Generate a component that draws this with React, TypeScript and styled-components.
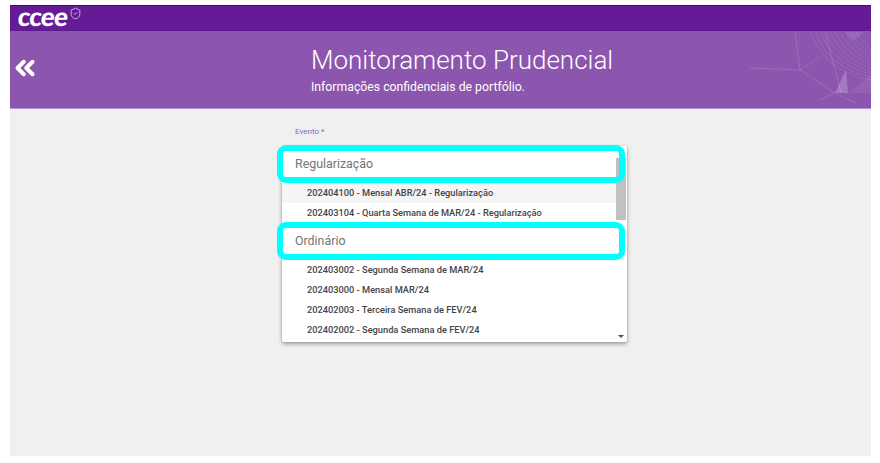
import React from "react";
import styled, { createGlobalStyle } from "styled-components";
import { ChevronsLeft, ShieldCheck } from "lucide-react";

const GlobalStyle = createGlobalStyle`
  html, body {
    margin: 0;
    padding: 0;
    background: #fff;
    font-family: Roboto, "Liberation Sans", sans-serif;
  }
`;

const Page = styled.div`
  width: 880px;
  height: 463px;
  padding: 5px 9px 7px 10px;
  box-sizing: border-box;
  overflow: hidden;
`;

const Screen = styled.div`
  height: 100%;
  display: flex;
  flex-direction: column;
  background: #f0f0f0;
`;

const TopBar = styled.header`
  flex: none;
  height: 26px;
  box-sizing: border-box;
  display: flex;
  align-items: flex-start;
  padding-left: 8px;
  background: #651b96;
  border-top: 1px solid #3b1259;
  border-bottom: 1px solid #5c1a88;
`;

const Logo = styled.div`
  display: flex;
  align-items: flex-start;
  color: #fff;
`;

const LogoName = styled.span`
  font-family: Lato, sans-serif;
  font-weight: 900;
  font-size: 26px;
  line-height: 20px;
  letter-spacing: -0.8px;
  transform: skewX(-6deg);
`;

const LogoShield = styled(ShieldCheck)`
  margin: 1px 0 0 2px;
  color: #e4d6ee;
`;

const Banner = styled.section`
  flex: none;
  position: relative;
  height: 78px;
  box-sizing: border-box;
  display: flex;
  align-items: flex-start;
  background: #8c55ae;
  border-bottom: 1px solid #b893cf;
  overflow: hidden;
`;

const BackButton = styled.button`
  flex: none;
  width: 30px;
  height: 32px;
  margin: 21px 0 0 0;
  padding: 0;
  border: 0;
  background: none;
  color: #fff;
  display: flex;
  align-items: center;
  justify-content: center;
`;

const Heading = styled.div`
  margin-left: 271px;
  padding-top: 13px;
  color: #fff;
`;

const Title = styled.h1`
  margin: 0;
  font-weight: 300;
  font-size: 26px;
  line-height: 33px;
`;

const Subtitle = styled.p`
  margin: 3px 0 0;
  font-size: 12.25px;
  line-height: 15px;
`;

const BannerArt = styled.svg`
  position: absolute;
  right: 0;
  top: 0;
`;

const Content = styled.main`
  flex: 1;
  padding: 18px 0 0 272px;
`;

const FieldLabel = styled.label`
  display: block;
  padding-left: 13px;
  font-size: 8px;
  line-height: 10px;
  color: #6c70bd;
`;

const Dropdown = styled.div`
  position: relative;
  width: 345px;
  height: 196px;
  margin-top: 9px;
  padding-right: 11px;
  box-sizing: border-box;
  background: #fff;
  border-radius: 2px;
  box-shadow: 0 2px 4px rgba(0, 0, 0, 0.35), 0 0 2px rgba(0, 0, 0, 0.15);
`;

const GroupHeader = styled.div`
  position: relative;
  z-index: 1;
  height: 37px;
  padding-left: 13px;
  font-size: 12.4px;
  line-height: 36px;
  color: #757575;

  &::after {
    content: "";
    position: absolute;
    left: -5px;
    right: -9px;
    top: -1px;
    bottom: 0;
    box-sizing: border-box;
    border: 6px solid #00ffff;
    border-radius: 9px;
  }
`;

const Option = styled.div<{ $active?: boolean }>`
  height: 20px;
  padding-left: 25px;
  font-size: 9.25px;
  font-weight: 500;
  line-height: 19px;
  color: #444;
  background: ${(p) => (p.$active ? "#f5f5f5" : "#fff")};
`;

const Scrollbar = styled.div`
  position: absolute;
  top: 0;
  right: 1px;
  bottom: 0;
  width: 10px;
  padding-top: 12px;
  box-sizing: border-box;
  background: #fff;
`;

const ScrollThumb = styled.div`
  height: 62px;
  background: #c1c1c1;
`;

const ScrollArrow = styled.div`
  position: absolute;
  left: 2px;
  bottom: 4px;
  border-left: 3px solid transparent;
  border-right: 3px solid transparent;
  border-top: 3px solid #505050;
`;

const regularizacao = [
  "202404100 - Mensal ABR/24 - Regularização",
  "202403104 - Quarta Semana de MAR/24 - Regularização",
];

const ordinario = [
  "202403002 - Segunda Semana de MAR/24",
  "202403000 - Mensal MAR/24",
  "202402003 - Terceira Semana de FEV/24",
  "202402002 - Segunda Semana de FEV/24",
];

const arcSteps = [0, 1, 2, 3, 4, 5, 6, 7, 8, 9];

const App = () => {
  return (
    <Page>
      <GlobalStyle />
      <Screen>
        <TopBar>
          <Logo>
            <LogoName>ccee</LogoName>
            <LogoShield size={13} strokeWidth={1.4} />
          </Logo>
        </TopBar>
        <Banner>
          <BackButton aria-label="Voltar">
            <ChevronsLeft size={32} strokeWidth={3.2} />
          </BackButton>
          <Heading>
            <Title>Monitoramento Prudencial</Title>
            <Subtitle>Informações confidenciais de portfólio.</Subtitle>
          </Heading>
          <BannerArt width="130" height="77" viewBox="0 0 130 77" fill="none">
            <g stroke="#fff" strokeOpacity="0.1" strokeWidth="1">
              {arcSteps.map((n) => (
                <path
                  key={n}
                  d={`M${70 + n * 5} 1c3 ${16 - n} ${24 - n} ${42 - n * 3} ${60 - n * 5} ${48 - n * 3}`}
                />
              ))}
            </g>
            <g stroke="#fff" strokeOpacity="0.14" strokeWidth="1">
              <path d="M9 37l50 2 20-13M54 1l5 38 35 23-15 7M94 62l21 10M84 1l16 60" />
            </g>
            <path d="M105 39l-11 23h13z" fill="#fff" fillOpacity="0.22" />
            <path d="M104 1h20l-12 9z" fill="#fff" fillOpacity="0.1" />
            <path d="M107 62l23-18v18z" fill="#fff" fillOpacity="0.07" />
          </BannerArt>
        </Banner>
        <Content>
          <FieldLabel>Evento *</FieldLabel>
          <Dropdown>
            <GroupHeader>Regularização</GroupHeader>
            {regularizacao.map((item, i) => (
              <Option key={item} $active={i === 0}>
                {item}
              </Option>
            ))}
            <GroupHeader>Ordinário</GroupHeader>
            {ordinario.map((item) => (
              <Option key={item}>{item}</Option>
            ))}
            <Scrollbar>
              <ScrollThumb />
              <ScrollArrow />
            </Scrollbar>
          </Dropdown>
        </Content>
      </Screen>
    </Page>
  );
};

export default App;
